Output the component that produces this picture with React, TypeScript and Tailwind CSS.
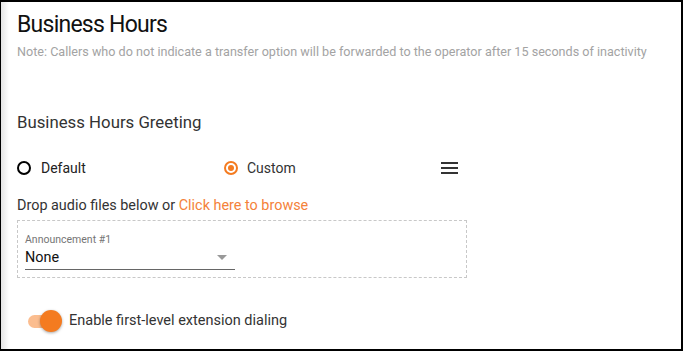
export default function App() {
  return (
    <div className="w-[683px] h-[351px] bg-black p-[2px] pl-[1px]" style={{ fontFamily: 'Roboto, "Liberation Sans", sans-serif' }}>
      <div className="relative w-full h-full bg-white overflow-hidden">
        <div className="absolute left-0 top-0 bottom-0 w-[8px] bg-gradient-to-r from-[#e4e4e4] to-white" />
        <div className="relative pl-[16px] pt-[8px]">
          <h1 className="text-[23px] leading-[30px] tracking-[-0.75px] text-[#111] font-normal">Business Hours</h1>
          <p className="mt-[4px] text-[12.6px] leading-[16px] text-[#a3a3a3]">
            Note: Callers who do not indicate a transfer option will be forwarded to the operator after 15 seconds of inactivity
          </p>

          <h2 className="mt-[52px] text-[16.8px] leading-[20px] text-[#333]">Business Hours Greeting</h2>

          <div className="mt-[26px] flex items-center h-[20px] w-[441px]">
            <div className="flex items-center w-[207px]">
              <span className="w-[14px] h-[14px] rounded-full border-[2px] border-black" />
              <span className="ml-[10px] text-[14px] text-[#222]">Default</span>
            </div>
            <div className="flex items-center">
              <span className="w-[14px] h-[14px] rounded-full border-[2px] border-[#f47b20] flex items-center justify-center">
                <span className="w-[6px] h-[6px] rounded-full bg-[#f47b20]" />
              </span>
              <span className="ml-[9px] text-[14px] text-[#333]">Custom</span>
            </div>
            <svg className="ml-auto" width="17" height="12" viewBox="0 0 17 12">
              <rect x="0" y="0" width="17" height="2" fill="#333" />
              <rect x="0" y="5" width="17" height="2" fill="#333" />
              <rect x="0" y="10" width="17" height="2" fill="#333" />
            </svg>
          </div>

          <p className="mt-[18px] text-[14.4px] leading-[20px] text-[#333]">
            Drop audio files below or <span className="text-[#f4823a]">Click here to browse</span>
          </p>

          <div className="mt-[4px] w-[450px] h-[58px] border border-dashed border-[#c8c8c8] px-[7px] pt-[13px]">
            <div className="text-[10.5px] leading-[12px] text-[#757575]">Announcement #1</div>
            <div className="w-[210px] h-[24px] border-b border-[#666] flex items-center justify-between pr-[8px]">
              <span className="text-[14.4px] text-[#111]">None</span>
              <span className="w-0 h-0 border-l-[5px] border-r-[5px] border-t-[5px] border-l-transparent border-r-transparent border-t-[#999]" />
            </div>
          </div>

          <div className="mt-[32px] ml-[11px] flex items-center">
            <div className="relative w-[34px] h-[22px] flex items-center">
              <div className="w-[32px] h-[13px] rounded-full bg-[#fbbd8f]" />
              <div className="absolute right-0 top-0 w-[22px] h-[22px] rounded-full bg-[#f47b20] shadow-[0_1px_3px_rgba(0,0,0,0.35)]" />
            </div>
            <span className="ml-[7px] text-[14.5px] text-[#333]">Enable first-level extension dialing</span>
          </div>
        </div>
      </div>
    </div>
  )
}
